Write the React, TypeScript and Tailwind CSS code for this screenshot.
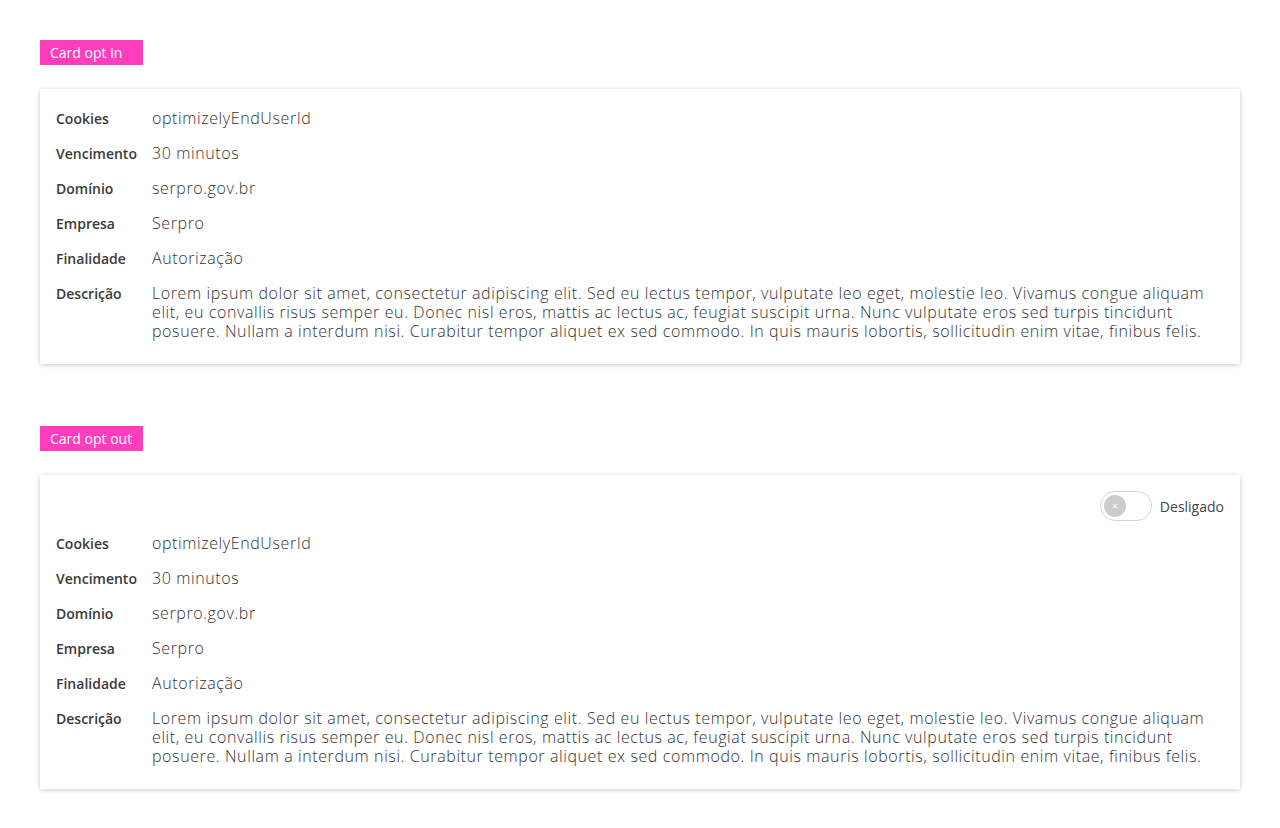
import React from "react";

const rows = [
  ["Cookies", "optimizelyEndUserId"],
  ["Vencimento", "30 minutos"],
  ["Domínio", "serpro.gov.br"],
  ["Empresa", "Serpro"],
  ["Finalidade", "Autorização"],
];

const desc = [
  "Lorem ipsum dolor sit amet, consectetur adipiscing elit. Sed eu lectus tempor, vulputate leo eget, molestie leo. Vivamus congue aliquam",
  "elit, eu convallis risus semper eu. Donec nisl eros, mattis ac lectus ac, feugiat suscipit urna. Nunc vulputate eros sed turpis tincidunt",
  "posuere. Nullam a interdum nisi. Curabitur tempor aliquet ex sed commodo. In quis mauris lobortis, sollicitudin enim vitae, finibus felis.",
];

function Row({ label, children }: { label: string; children: React.ReactNode }) {
  return (
    <div className="flex items-baseline">
      <div className="w-[96px] shrink-0 text-[14px] leading-[19px] font-semibold text-[#3a3a3a]">{label}</div>
      <div className="flex-1 text-[16px] leading-[19px] font-light tracking-[0.6px] text-[#333333]">{children}</div>
    </div>
  );
}

function Card({ toggle }: { toggle?: boolean }) {
  return (
    <div className={`bg-white shadow-[0_1px_5px_rgba(0,0,0,0.22)] pl-4 pr-4 ${toggle ? "pt-4" : "pt-5"} pb-[23px]`}>
      {toggle && (
        <div className="flex justify-end items-center gap-2 mb-[13px]">
          <div className="w-[52px] h-[30px] rounded-full border border-[#d4d4d4] bg-white flex items-center pl-[3px]">
            <div className="w-[22px] h-[22px] rounded-full bg-[#cccccc] flex items-center justify-center text-white text-[10px] leading-none">×</div>
          </div>
          <span className="text-[14px] text-[#444444]">Desligado</span>
        </div>
      )}
      <div className="flex flex-col gap-4">
        {rows.map(([l, v]) => (
          <Row key={l} label={l}>{v}</Row>
        ))}
        <Row label="Descrição">
          {desc.map((d, i) => (
            <span key={i} className="block whitespace-nowrap">{d}</span>
          ))}
        </Row>
      </div>
    </div>
  );
}

export default function App() {
  return (
    <div className="min-h-[828px] bg-white px-10 pt-10 pb-10" style={{ fontFamily: '"Open Sans", sans-serif' }}>
      <div className="flex items-center h-[25px] w-[103px] px-[10px] bg-[#ff3dbd] text-white text-[14px] font-medium">Card opt in</div>
      <div className="mt-6">
        <Card />
      </div>
      <div className="mt-[62px] flex items-center h-[25px] w-[103px] px-[10px] bg-[#ff3dbd] text-white text-[14px] font-medium">Card opt out</div>
      <div className="mt-6">
        <Card toggle />
      </div>
    </div>
  );
}
